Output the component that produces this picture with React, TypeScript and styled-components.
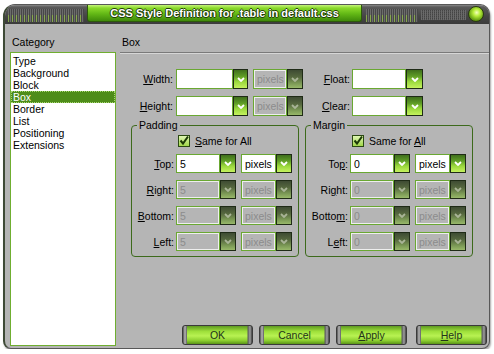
import React from 'react'
import styled, { createGlobalStyle, css } from 'styled-components'

const GlobalStyle = createGlobalStyle`
  html, body {
    margin: 0;
    padding: 0;
    background: #ffffff;
  }
  body {
    font-family: 'Liberation Sans', Arial, sans-serif;
    font-size: 10.5px;
    color: #000;
  }
  * {
    box-sizing: border-box;
  }
`

const categories = [
  'Type',
  'Background',
  'Block',
  'Box',
  'Border',
  'List',
  'Positioning',
  'Extensions',
]

type Side = { label: React.ReactNode; value: string }

const paddingSides: Side[] = [
  { label: <><u>T</u>op:</>, value: '5' },
  { label: <><u>R</u>ight:</>, value: '5' },
  { label: <><u>B</u>ottom:</>, value: '5' },
  { label: <><u>L</u>eft:</>, value: '5' },
]

const marginSides: Side[] = [
  { label: <>To<u>p</u>:</>, value: '0' },
  { label: <>Ri<u>g</u>ht:</>, value: '0' },
  { label: <>Botto<u>m</u>:</>, value: '0' },
  { label: <>L<u>e</u>ft:</>, value: '0' },
]

const Chevron = ({ disabled }: { disabled?: boolean }) => (
  <svg width="8" height="5" viewBox="0 0 8 5">
    <path
      d="M1 1 L4 4 L7 1"
      fill="none"
      stroke={disabled ? '#a9b497' : '#ffffff'}
      strokeWidth="1.8"
    />
  </svg>
)

type ComboProps = {
  value?: string
  width: number
  buttonWidth?: number
  height?: number
  disabled?: boolean
}

const Combo = ({ value = '', width, buttonWidth = 16, height = 19, disabled }: ComboProps) => (
  <ComboWrap $height={height}>
    <ComboField $width={width} $disabled={disabled}>
      {value}
    </ComboField>
    <DropButton $width={buttonWidth} $disabled={disabled}>
      <Chevron disabled={disabled} />
    </DropButton>
  </ComboWrap>
)

const CheckMark = () => (
  <svg width="12" height="12" viewBox="0 0 12 12">
    <defs>
      <linearGradient id="cbfill" x1="0" y1="0" x2="0" y2="1">
        <stop offset="0" stopColor="#e2f8b8" />
        <stop offset="1" stopColor="#9ed644" />
      </linearGradient>
    </defs>
    <rect x="0.5" y="0.5" width="11" height="11" fill="url(#cbfill)" stroke="#2b4a12" />
    <path d="M2.5 5.5 L5 8.5 L10 1.5" fill="none" stroke="#1c3a06" strokeWidth="2" />
  </svg>
)

const SideGroup = ({
  title,
  sides,
  accel,
}: {
  title: string
  sides: Side[]
  accel: React.ReactNode
}) => (
  <Group>
    <Legend>{title}</Legend>
    <CheckRow>
      <CheckMark />
      <span>{accel}</span>
    </CheckRow>
    {sides.map((side, i) => (
      <SideRow key={i}>
        <SideLabel>{side.label}</SideLabel>
        <Combo value={side.value} width={44} disabled={i > 0} />
        <Combo value="pixels" width={35} disabled={i > 0} />
      </SideRow>
    ))}
  </Group>
)

export default function App() {
  return (
    <>
      <GlobalStyle />
      <Dialog>
        <TitleBar>
          <Ticks $width={76} />
          <TitleTab>CSS Style Definition for .table in default.css</TitleTab>
          <Ticks $width={52} />
          <Grain />
          <CloseOrb />
        </TitleBar>

        <Body>
          <Sidebar>
            <PaneHeader>Category</PaneHeader>
            <CategoryList>
              {categories.map((name) => (
                <CategoryItem key={name} $selected={name === 'Box'}>
                  {name}
                </CategoryItem>
              ))}
            </CategoryList>
          </Sidebar>

          <Main>
            <PaneHeader $indent={6}>Box</PaneHeader>
            <Separator />

            <TopRow $gap={15}>
              <TopLabel>
                <u>W</u>idth:
              </TopLabel>
              <Combo width={57} buttonWidth={15} height={20} />
              <Combo value="pixels" width={34} height={20} disabled />
              <FloatLabel>
                <u>F</u>loat:
              </FloatLabel>
              <Combo width={54} buttonWidth={17} height={20} />
            </TopRow>
            <TopRow $gap={7}>
              <TopLabel>
                <u>H</u>eight:
              </TopLabel>
              <Combo width={57} buttonWidth={15} height={20} />
              <Combo value="pixels" width={34} height={20} disabled />
              <FloatLabel>
                <u>C</u>lear:
              </FloatLabel>
              <Combo width={54} buttonWidth={17} height={20} />
            </TopRow>

            <Groups>
              <SideGroup
                title="Padding"
                sides={paddingSides}
                accel={
                  <>
                    <u>S</u>ame for All
                  </>
                }
              />
              <SideGroup
                title="Margin"
                sides={marginSides}
                accel={
                  <>
                    Same for <u>A</u>ll
                  </>
                }
              />
            </Groups>

            <Buttons>
              <Button>OK</Button>
              <Button>Cancel</Button>
              <Button>
                <u>A</u>pply
              </Button>
              <Button $gapBefore={9}>
                <u>H</u>elp
              </Button>
            </Buttons>
          </Main>
        </Body>
      </Dialog>
    </>
  )
}

const Dialog = styled.div`
  margin: 4px 0 0 3px;
  width: 487px;
  height: 345px;
  display: flex;
  flex-direction: column;
  background: #b5b5b5;
  border: 1px solid #585858;
  border-left: 2px solid #3e4a36;
  border-radius: 12px 10px 8px 8px;
  box-shadow: 1px 2px 2px rgba(0, 0, 0, 0.35);
  overflow: hidden;
`

const TitleBar = styled.div`
  height: 19px;
  flex: none;
  display: flex;
  align-items: stretch;
  padding: 0 5px 0 3px;
  background: linear-gradient(#8a8a8a 0, #5a5a5a 2px, #454545 60%, #3a3a3a 100%);
`

const Ticks = styled.div<{ $width: number }>`
  width: ${({ $width }) => $width}px;
  margin: 4px 3px 2px 0;
  background:
    repeating-linear-gradient(90deg, #86a84c 0 1px, transparent 1px 4px) bottom / 100% 55% no-repeat,
    repeating-linear-gradient(90deg, #6c6c6c 0 1px, #474747 1px 2px);
`

const TitleTab = styled.div`
  width: 275px;
  height: 17px;
  margin-right: 4px;
  display: flex;
  align-items: center;
  justify-content: center;
  border: 1px solid #2d5a0a;
  border-top: none;
  border-radius: 0 0 3px 3px;
  background: linear-gradient(#c6f57c 0, #8ad92a 3px, #63b816 55%, #3f8a0a 100%);
  font-family: 'Liberation Sans', Arial, sans-serif;
  font-weight: bold;
  font-size: 11px;
  color: #ffffff;
  text-shadow:
    1px 0 0 #1f3d08,
    -1px 0 0 #1f3d08,
    0 1px 0 #1f3d08,
    0 -1px 0 #1f3d08;
`

const Grain = styled.div`
  flex: 1;
  margin: 5px 2px 4px 0;
  background:
    repeating-linear-gradient(90deg, #6a6a6a 0 1px, transparent 1px 2px),
    repeating-linear-gradient(0deg, #525252 0 1px, #444 1px 2px);
`

const CloseOrb = styled.div`
  width: 16px;
  height: 16px;
  margin-top: 1px;
  border-radius: 50%;
  border: 1px solid #2a3a10;
  background: radial-gradient(circle at 55% 40%, #f4ffc0 0, #b8ee3c 30%, #6aa414 65%, #3a5a08 100%);
`

const Body = styled.div`
  flex: 1;
  display: flex;
  min-height: 0;
`

const Sidebar = styled.div`
  width: 111px;
  flex: none;
  display: flex;
  flex-direction: column;
  padding: 0 0 2px 5px;
`

const PaneHeader = styled.div<{ $indent?: number }>`
  height: 28px;
  flex: none;
  padding: 12px 0 0 ${({ $indent }) => $indent ?? 2}px;
  line-height: 13px;
`

const CategoryList = styled.div`
  flex: 1;
  background: #ffffff;
  border: 1px solid #6fae30;
  padding: 2px 0;
`

const CategoryItem = styled.div<{ $selected?: boolean }>`
  height: 12px;
  line-height: 12px;
  padding-left: 2px;
  ${({ $selected }) =>
    $selected &&
    css`
      background: #4e8c1a;
      color: #ffffff;
      outline: 1px dotted #a8d870;
      outline-offset: -1px;
    `}
`

const Main = styled.div`
  flex: 1;
  display: flex;
  flex-direction: column;
  padding-bottom: 3px;
`

const Separator = styled.div`
  margin-left: 4px;
  height: 2px;
  flex: none;
  border-top: 1px solid #7a7a7a;
  border-bottom: 1px solid #d6d6d6;
`

const TopRow = styled.div<{ $gap: number }>`
  display: flex;
  align-items: center;
  height: 20px;
  margin-top: ${({ $gap }) => $gap}px;
`

const TopLabel = styled.span`
  width: 57px;
  margin-right: 3px;
  text-align: right;
`

const FloatLabel = styled.span`
  width: 44px;
  text-align: right;
  padding-right: 2px;
`

const ComboWrap = styled.div<{ $height: number }>`
  display: flex;
  height: ${({ $height }) => $height}px;
  margin-right: 5px;
`

const ComboField = styled.div<{ $width: number; $disabled?: boolean }>`
  width: ${({ $width }) => $width}px;
  height: 100%;
  display: flex;
  align-items: center;
  padding-left: 3px;
  border: 1px solid #6aa832;
  background: #ffffff;
  color: #000;
  ${({ $disabled }) =>
    $disabled &&
    css`
      background: #b5b5b5;
      color: #8c8c8c;
      box-shadow: inset 0 0 0 1px #eeeeee;
    `}
`

const DropButton = styled.div<{ $width: number; $disabled?: boolean }>`
  width: ${({ $width }) => $width}px;
  height: 100%;
  display: flex;
  align-items: center;
  justify-content: center;
  border: 1px solid #1f2b16;
  background: ${({ $disabled }) =>
    $disabled
      ? 'linear-gradient(#3e4b33 0%, #56683f 40%, #7c9a56 75%, #98b86a 100%)'
      : 'linear-gradient(#3f6e1c 0%, #5e9c26 35%, #9ad83c 65%, #c4f25e 100%)'};
`

const Groups = styled.div`
  display: flex;
  gap: 6px;
  margin: 3px 0 0 15px;
`

const Group = styled.fieldset`
  width: 168px;
  margin: 0;
  padding: 0 0 5px 0;
  min-width: 0;
  border: 1px solid #3d6a1c;
  border-radius: 4px;
`

const Legend = styled.legend`
  margin-left: 5px;
  padding: 0 2px;
  line-height: 12px;
`

const CheckRow = styled.div`
  display: flex;
  align-items: center;
  gap: 5px;
  height: 12px;
  margin: 4px 0 0 46px;
`

const SideRow = styled.div`
  display: flex;
  align-items: center;
  height: 19px;
  margin-top: 7px;
`

const SideLabel = styled.span`
  width: 42px;
  margin-right: 2px;
  text-align: right;
`

const Buttons = styled.div`
  margin-top: auto;
  display: flex;
  justify-content: flex-end;
  gap: 6px;
  padding-right: 2px;
`

const Button = styled.button<{ $gapBefore?: number }>`
  width: 71px;
  height: 20px;
  margin-left: ${({ $gapBefore }) => ($gapBefore ? $gapBefore - 6 : 0)}px;
  padding: 0;
  border: 1px solid #3a3a3a;
  border-radius: 3px;
  font-family: 'Liberation Sans', Arial, sans-serif;
  font-size: 10.5px;
  color: #23331a;
  background:
    linear-gradient(90deg, #505050 0, #b8b8b8 2px, #5a5a5a 4px, transparent 4px) left / 5px 100% no-repeat,
    linear-gradient(90deg, transparent 0, #5a5a5a 1px, #a0a0a0 3px, #404040 5px) right / 5px 100% no-repeat,
    linear-gradient(#5e9a22 0%, #9ee03a 30%, #b8f252 55%, #8ed030 80%, #5a9418 100%);
`
